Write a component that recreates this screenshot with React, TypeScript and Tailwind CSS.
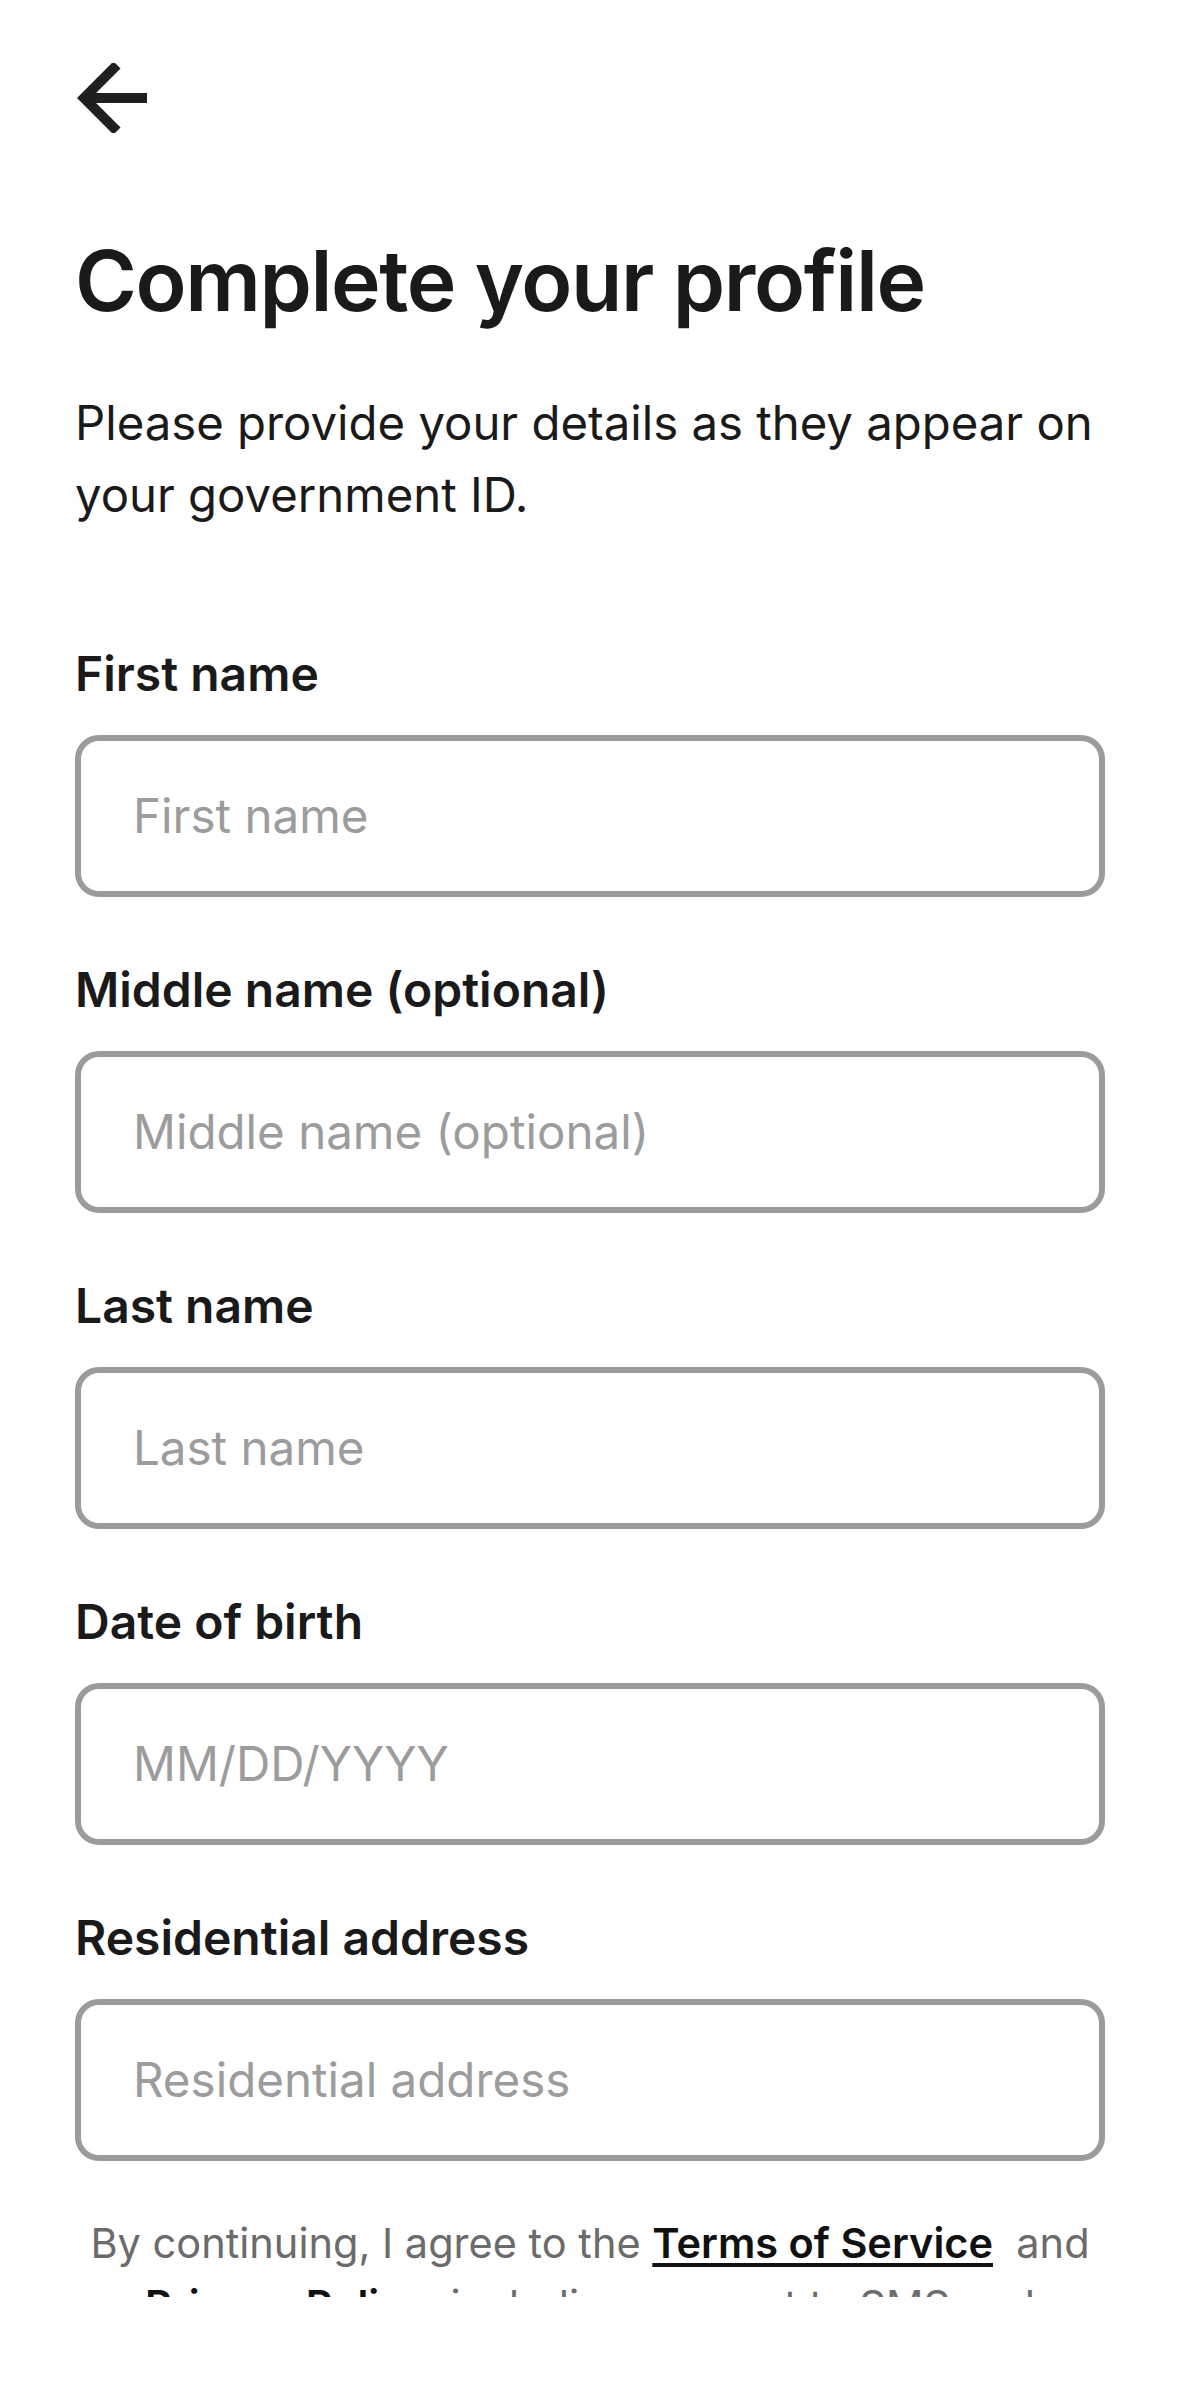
import React from "react";

const fields = [
  { label: "First name", placeholder: "First name" },
  { label: "Middle name (optional)", placeholder: "Middle name (optional)" },
  { label: "Last name", placeholder: "Last name" },
  { label: "Date of birth", placeholder: "MM/DD/YYYY" },
  { label: "Residential address", placeholder: "Residential address" },
];

function BackArrow() {
  return (
    <svg width="70" height="70" viewBox="0 0 70 70" fill="none" className="block">
      <path d="M40 2 L7 35 L40 68" stroke="#1f1f1f" strokeWidth="10" strokeLinejoin="miter" strokeLinecap="butt" />
      <path d="M8 35 H70" stroke="#1f1f1f" strokeWidth="10" strokeLinecap="butt" />
    </svg>
  );
}

export default function App() {
  return (
    <div className="flex h-[2396px] w-[1180px] flex-col bg-white font-['Inter',sans-serif] text-[#1a1a1a]">
      <div className="h-[2297px] overflow-hidden px-[75px]">
        <div className="pt-[63px] pl-[2px]">
          <BackArrow />
        </div>
        <h1 className="mt-[98px] text-[84px] font-semibold leading-[100px] tracking-[-1.4px]">
          Complete your profile
        </h1>
        <p className="mt-[56px] text-[47.3px] font-normal leading-[72px]">
          Please provide your details as they appear on
          <br />
          your government ID.
        </p>
        <div className="mt-[113px] flex flex-col gap-[63px]">
          {fields.map((f) => (
            <div key={f.label} className="flex flex-col gap-[31px]">
              <label className="text-[48px] font-semibold leading-[60px]">{f.label}</label>
              <div className="flex h-[162px] items-center rounded-[24px] border-[6px] border-[#9b9b9b] px-[52px]">
                <input
                  placeholder={f.placeholder}
                  className="w-full bg-transparent text-[47.5px] leading-[60px] text-[#1a1a1a] outline-none placeholder:text-[#9c9c9c]"
                />
              </div>
            </div>
          ))}
        </div>
        <p className="mt-[51px] text-center text-[41.5px] leading-[62px] text-[#6b6b6b]">
          By continuing, I agree to the{" "}
          <span className="font-semibold text-[#111] underline decoration-[4px] underline-offset-[5px]">Terms of Service</span>
          {"\u00a0 "}and
          <br />
          <span className="font-semibold text-[#111] underline decoration-[4px] underline-offset-[5px]">Privacy Policy</span>, including consent to SMS and
          <br />
          email notifications.
        </p>
      </div>
      <div className="flex-1 bg-white" />
    </div>
  );
}
